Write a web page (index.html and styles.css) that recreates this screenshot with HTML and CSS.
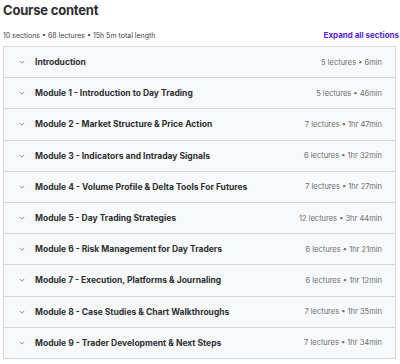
FILE: index.html
```html
<!DOCTYPE html>
<html lang="en">
<head>
  <meta charset="UTF-8" />
  <title>Course content</title>
  <link rel="stylesheet" href="styles.css">
</head>
<body>

<div class="curriculum">
  <h2 class="title">Course content</h2>

  <div class="summary">
    <span>10 sections • 68 lectures • 15h 5m total length</span>
    <button class="expand">Expand all sections</button>
  </div>

  <div class="sections">
    <div class="section">
      <svg class="chevron" viewBox="0 0 8 5"><path d="M1 1 L4 4 L7 1" /></svg>
      <span class="name">Introduction</span>
      <span class="meta">5 lectures • 6min</span>
    </div>
    <div class="section">
      <svg class="chevron" viewBox="0 0 8 5"><path d="M1 1 L4 4 L7 1" /></svg>
      <span class="name">Module 1 - Introduction to Day Trading</span>
      <span class="meta">5 lectures • 46min</span>
    </div>
    <div class="section">
      <svg class="chevron" viewBox="0 0 8 5"><path d="M1 1 L4 4 L7 1" /></svg>
      <span class="name">Module 2 - Market Structure &amp; Price Action</span>
      <span class="meta">7 lectures • 1hr 47min</span>
    </div>
    <div class="section">
      <svg class="chevron" viewBox="0 0 8 5"><path d="M1 1 L4 4 L7 1" /></svg>
      <span class="name">Module 3 - Indicators and Intraday Signals</span>
      <span class="meta">6 lectures • 1hr 32min</span>
    </div>
    <div class="section">
      <svg class="chevron" viewBox="0 0 8 5"><path d="M1 1 L4 4 L7 1" /></svg>
      <span class="name">Module 4 - Volume Profile &amp; Delta Tools For Futures</span>
      <span class="meta">7 lectures • 1hr 27min</span>
    </div>
    <div class="section">
      <svg class="chevron" viewBox="0 0 8 5"><path d="M1 1 L4 4 L7 1" /></svg>
      <span class="name">Module 5 - Day Trading Strategies</span>
      <span class="meta">12 lectures • 3hr 44min</span>
    </div>
    <div class="section">
      <svg class="chevron" viewBox="0 0 8 5"><path d="M1 1 L4 4 L7 1" /></svg>
      <span class="name">Module 6 - Risk Management for Day Traders</span>
      <span class="meta">6 lectures • 1hr 21min</span>
    </div>
    <div class="section">
      <svg class="chevron" viewBox="0 0 8 5"><path d="M1 1 L4 4 L7 1" /></svg>
      <span class="name">Module 7 - Execution, Platforms &amp; Journaling</span>
      <span class="meta">6 lectures • 1hr 12min</span>
    </div>
    <div class="section">
      <svg class="chevron" viewBox="0 0 8 5"><path d="M1 1 L4 4 L7 1" /></svg>
      <span class="name">Module 8 - Case Studies &amp; Chart Walkthroughs</span>
      <span class="meta">7 lectures • 1hr 35min</span>
    </div>
    <div class="section">
      <svg class="chevron" viewBox="0 0 8 5"><path d="M1 1 L4 4 L7 1" /></svg>
      <span class="name">Module 9 - Trader Development &amp; Next Steps</span>
      <span class="meta">7 lectures • 1hr 34min</span>
    </div>
  </div>
</div>

</body>
</html>
```

FILE: styles.css
```css
* {
  box-sizing: border-box;
  margin: 0;
  padding: 0;
}

body {
  font-family: Inter, 'Noto Sans', sans-serif;
  background: #ffffff;
  color: #2d2f31;
}

.curriculum {
  padding: 2px 3px 0 3px;
  width: 400px;
}

.title {
  font-size: 13px;
  font-weight: 700;
  letter-spacing: -0.2px;
  line-height: 16px;
  height: 27px;
}

.summary {
  display: flex;
  justify-content: space-between;
  align-items: center;
  font-size: 7px;
  color: #3e4143;
  height: 12px;
  margin-bottom: 5px;
}

.expand {
  background: none;
  border: none;
  font-family: inherit;
  font-size: 8px;
  font-weight: 700;
  color: #5624d0;
  margin-right: -2px;
}

.sections {
  width: 393px;
  border: 1px solid #d1d7dc;
  border-top: none;
}

.section {
  display: flex;
  align-items: center;
  height: 31.2px;
  background: #f7f9fa;
  border-top: 1px solid #d1d7dc;
  padding: 0 13px 0 15px;
}

.chevron {
  width: 6px;
  height: 4px;
  fill: none;
  stroke: #6a6f73;
  stroke-width: 1;
  margin-right: 10px;
}

.name {
  flex: 1;
  font-size: 8.5px;
  font-weight: 700;
  color: #2d2f31;
}

.meta {
  font-size: 7.5px;
  color: #6a6f73;
}
```
